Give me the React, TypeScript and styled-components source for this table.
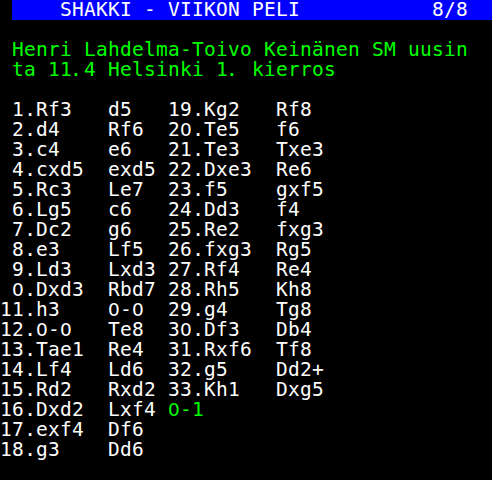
import React from "react";
import styled, { createGlobalStyle } from "styled-components";

const Global = createGlobalStyle`
  html, body { margin: 0; padding: 0; background: #000; }
  #root { width: 492px; height: 480px; }
`;

const Screen = styled.div`
  width: 492px;
  height: 480px;
  background: #000;
  font-family: "DejaVu Sans Mono", "Liberation Mono", monospace;
  font-size: 19.5px;
  letter-spacing: 0.26px;
  line-height: 20px;
  color: #fff;
  display: flex;
  flex-direction: column;
`;

const HeaderRow = styled.div`
  height: 20px;
  padding-left: 12px;
  display: flex;
`;

const HeaderBar = styled.div`
  flex: 1;
  height: 20px;
  background: #0000ff;
  color: #fff;
  display: flex;
  justify-content: space-between;
  padding: 0 24px 0 48px;
  white-space: pre;
`;

const Line = styled.div<{ $color?: string }>`
  height: 20px;
  padding-left: 12px;
  white-space: pre;
  color: ${(p) => p.$color || "#fff"};
`;

const Spacer = styled.div`
  height: 20px;
`;

const MoveGrid = styled.div`
  display: grid;
  grid-template-columns: 36px 72px 60px 36px 72px 1fr;
  grid-auto-rows: 20px;
`;

const Num = styled.div`
  white-space: pre;
  text-align: right;
`;

const Move = styled.div`
  white-space: pre;
`;

const Empty = styled.div`
  grid-column: span 3;
`;

const Result = styled.div`
  white-space: pre;
  color: #00ff00;
  grid-column: span 3;
`;

const Zero = styled.span`
  display: inline-block;
  width: 12px;
  text-align: center;
  letter-spacing: 0;
  font-family: "DejaVu Sans", sans-serif;
  font-size: 18.5px;
`;

const Dot = styled.span`
  display: inline-block;
  width: 12px;
  letter-spacing: 0;
  text-indent: -2px;
`;

function tele(text: string): React.ReactNode[] {
  const out: React.ReactNode[] = [];
  let run = "";
  const flush = () => {
    if (run) {
      out.push(run);
      run = "";
    }
  };
  Array.from(text).forEach((ch, i) => {
    if (ch === "0") {
      flush();
      out.push(<Zero key={i}>0</Zero>);
    } else if (ch === ".") {
      flush();
      out.push(<Dot key={i}>.</Dot>);
    } else {
      run += ch;
    }
  });
  flush();
  return out;
}

type Row = [string, string, string, string?, string?, string?];

const rows: Row[] = [
  ["1.", "Rf3", "d5", "19.", "Kg2", "Rf8"],
  ["2.", "d4", "Rf6", "20.", "Te5", "f6"],
  ["3.", "c4", "e6", "21.", "Te3", "Txe3"],
  ["4.", "cxd5", "exd5", "22.", "Dxe3", "Re6"],
  ["5.", "Rc3", "Le7", "23.", "f5", "gxf5"],
  ["6.", "Lg5", "c6", "24.", "Dd3", "f4"],
  ["7.", "Dc2", "g6", "25.", "Re2", "fxg3"],
  ["8.", "e3", "Lf5", "26.", "fxg3", "Rg5"],
  ["9.", "Ld3", "Lxd3", "27.", "Rf4", "Re4"],
  ["0.", "Dxd3", "Rbd7", "28.", "Rh5", "Kh8"],
  ["11.", "h3", "0-0", "29.", "g4", "Tg8"],
  ["12.", "0-0", "Te8", "30.", "Df3", "Db4"],
  ["13.", "Tae1", "Re4", "31.", "Rxf6", "Tf8"],
  ["14.", "Lf4", "Ld6", "32.", "g5", "Dd2+"],
  ["15.", "Rd2", "Rxd2", "33.", "Kh1", "Dxg5"],
  ["16.", "Dxd2", "Lxf4"],
  ["17.", "exf4", "Df6"],
  ["18.", "g3", "Dd6"],
];

export default function App() {
  return (
    <>
      <Global />
      <Screen>
        <HeaderRow>
          <HeaderBar>
            <span>SHAKKI - VIIKON PELI</span>
            <span>8/8</span>
          </HeaderBar>
        </HeaderRow>
        <Spacer />
        <Line $color="#00ff00">{tele("Henri Lahdelma-Toivo Keinänen SM uusin")}</Line>
        <Line $color="#00ff00">{tele("ta 11.4 Helsinki 1. kierros")}</Line>
        <Spacer />
        <MoveGrid>
          {rows.map((r, i) => (
            <React.Fragment key={i}>
              <Num>{tele(r[0])}</Num>
              <Move>{tele(r[1])}</Move>
              <Move>{tele(r[2])}</Move>
              {r[3] ? (
                <>
                  <Num>{tele(r[3])}</Num>
                  <Move>{tele(r[4] || "")}</Move>
                  <Move>{tele(r[5] || "")}</Move>
                </>
              ) : i === 15 ? (
                <Result>{tele("0-1")}</Result>
              ) : (
                <Empty />
              )}
            </React.Fragment>
          ))}
        </MoveGrid>
      </Screen>
    </>
  );
}
